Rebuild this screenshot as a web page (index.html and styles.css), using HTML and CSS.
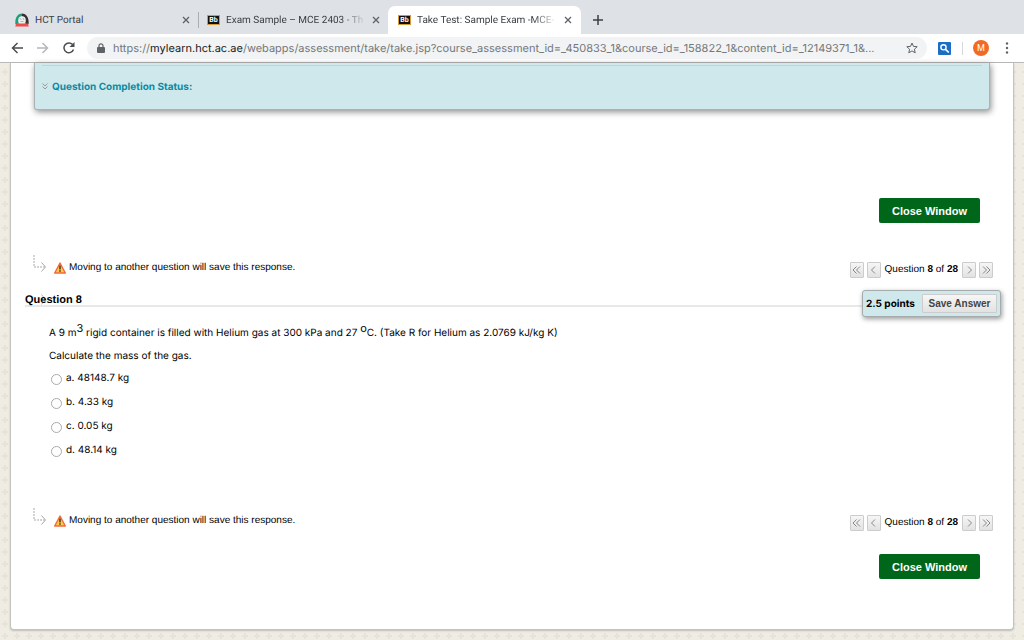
FILE: index.html
```html
<!DOCTYPE html>
<html lang="en">
<head>
  <meta charset="UTF-8">
  <meta name="viewport" content="width=device-width, initial-scale=1.0">
  <title>Take Test: Sample Exam</title>
  <link rel="stylesheet" href="styles.css">
</head>
<body>

  <!-- Shared icons -->
  <svg class="sprite" aria-hidden="true">
    <symbol id="close" viewBox="0 0 8 8"><path d="M1 1l6 6M7 1L1 7" fill="none" stroke="#5f6368" stroke-width="1.3"/></symbol>
    <symbol id="step" viewBox="0 0 14 17">
      <path d="M1 0v12h11" fill="none" stroke="#aaa" stroke-dasharray="2 1"/>
      <path d="M8.500 7.500l4 4.500-4 4.500" fill="none" stroke="#aaa"/>
    </symbol>
    <symbol id="warning" viewBox="0 0 12 12">
      <path d="M6 1L11.300 11H.7z" fill="#ffc94a" stroke="#f4683c" stroke-width="1.400" stroke-linejoin="round"/>
      <path d="M6 3.600v3.800M6 8.300v1.500" stroke="#222" stroke-width="1.300"/>
    </symbol>
    <symbol id="single" viewBox="0 0 9 8"><path d="M6 .5L2.500 4 6 7.500" fill="none" stroke="#888"/></symbol>
    <symbol id="double" viewBox="0 0 9 8"><path d="M4.500 .5L1 4l3.500 3.500M8 .5L4.500 4 8 7.500" fill="none" stroke="#888"/></symbol>
  </svg>

  <!-- Browser bar -->
  <header class="browser">
    <div class="tabs">
      <div class="tab">
        <svg class="portal-icon" viewBox="0 0 14 14">
          <path d="M.5 11C-.5 5 3 .5 7 .5v3C4 4 3.500 8 3.500 11z" fill="#1d9f77"/>
          <path d="M7 .5c4 0 7.500 4.500 6.500 10.500h-3c0-3-.5-6.500-3.500-7.500z" fill="#333"/>
          <circle cx="7" cy="7" r="3.800" fill="#eee"/>
          <path d="M4.500 5.500l2 1M8 5l1 2M5.500 8.500h3" stroke="#999" stroke-width=".7"/>
          <path d="M0 10.500h14l-1 1.500 1 1.500H0L1 12z" fill="#ef4b4b"/>
        </svg>
        <span class="tab-title">HCT Portal</span>
        <button class="tab-close" aria-label="Close tab"><svg><use href="#close"/></svg></button>
      </div>
      <div class="tab tab-second">
        <span class="bb-icon">Bb</span>
        <span class="tab-title fade">Exam Sample – MCE 2403 - Th</span>
        <button class="tab-close" aria-label="Close tab"><svg><use href="#close"/></svg></button>
      </div>
      <div class="tab active">
        <span class="bb-icon">Bb</span>
        <span class="tab-title fade">Take Test: Sample Exam -MCE-</span>
        <button class="tab-close" aria-label="Close tab"><svg><use href="#close"/></svg></button>
      </div>
      <button class="new-tab" aria-label="New tab"><svg viewBox="0 0 10 10"><path d="M5 0v10M0 5h10" stroke="#3c4043" stroke-width="1.500"/></svg></button>
    </div>

    <div class="toolbar">
      <button class="tool" aria-label="Back"><svg viewBox="0 0 12 12"><path d="M12 6H1.500M6.500 1l-5 5 5 5" fill="none" stroke="#4a4d51" stroke-width="1.500"/></svg></button>
      <button class="tool" aria-label="Forward"><svg viewBox="0 0 12 12"><path d="M0 6h10.500M5.500 1l5 5-5 5" fill="none" stroke="#b5b7ba" stroke-width="1.500"/></svg></button>
      <button class="tool" aria-label="Reload"><svg viewBox="0 0 12 12"><path d="M10.500 7.500A4.900 4.900 0 1 1 9.600 2.600" fill="none" stroke="#4a4d51" stroke-width="1.500"/><path d="M11.500 0v5h-5z" fill="#4a4d51"/></svg></button>
      <div class="address">
        <svg class="lock" viewBox="0 0 8 10"><rect y="4" width="8" height="6" rx="1" fill="#5f6368"/><path d="M2 4.500V2.800a2 2 0 0 1 4 0v1.700" fill="none" stroke="#5f6368" stroke-width="1.200"/></svg>
        <span class="url">https://<b>mylearn.hct.ac.ae</b>/webapps/assessment/take/take.jsp?course_assessment_id=_450833_1&amp;course_id=_158822_1&amp;content_id=_12149371_1&amp;...</span>
        <svg class="star" viewBox="0 0 12 12"><path d="M6 1l1.500 3.400 3.700.3-2.800 2.500.8 3.600L6 8.900l-3.200 1.900.8-3.600L.8 4.700l3.700-.3z" fill="none" stroke="#5f6368"/></svg>
      </div>
      <button class="extension" aria-label="Search extension"><svg viewBox="0 0 13 13"><rect width="13" height="13" rx="1" fill="#1b6ec2"/><circle cx="5.500" cy="5.300" r="2.600" fill="none" stroke="#fff" stroke-width="1.400"/><path d="M7.500 7.300l3.300 3.200" stroke="#fff" stroke-width="1.700"/></svg></button>
      <button class="avatar">M</button>
      <button class="menu" aria-label="Menu"><svg viewBox="0 0 4 12"><circle cx="2" cy="1.500" r="1.200"/><circle cx="2" cy="6" r="1.200"/><circle cx="2" cy="10.500" r="1.200"/></svg></button>
    </div>
  </header>

  <main class="page">
    <section class="status">
      <a href="#" class="status-link"><svg viewBox="0 0 6 7"><path d="M.5 .5L3 3 5.500 .5M.5 3.500L3 6l2.500-2.500" fill="none" stroke="#999"/></svg>Question Completion Status:</a>
    </section>

    <div class="close-row">
      <button class="close-window">Close Window</button>
    </div>

    <div class="move-row">
      <svg class="step"><use href="#step"/></svg>
      <svg class="warning"><use href="#warning"/></svg>
      <span class="move-text">Moving to another question will save this response.</span>
      <nav class="pager">
        <button aria-label="First question"><svg><use href="#double"/></svg></button>
        <button aria-label="Previous question"><svg><use href="#single"/></svg></button>
        <span>Question <b>8</b> of <b>28</b></span>
        <button class="next" aria-label="Next question"><svg><use href="#single"/></svg></button>
        <button class="next" aria-label="Last question"><svg><use href="#double"/></svg></button>
      </nav>
    </div>

    <div class="question-head">
      <h1>Question 8<svg class="head-arrow" viewBox="0 0 5 11"><path d="M.5 .5l4 5-4 5" fill="none" stroke="#bbb"/></svg></h1>
      <div class="points">
        <span>2.5 points</span>
        <button>Save Answer</button>
      </div>
    </div>

    <form class="question">
      <p>A 9 m<sup>3</sup> rigid container is filled with Helium gas at 300 kPa and 27 <sup>o</sup>C. (Take R for Helium as 2.0769 kJ/kg K)</p>
      <p>Calculate the mass of the gas.</p>
      <div class="answers">
        <label><input type="radio" name="answer"><span>a. 48148.7 kg</span></label>
        <label><input type="radio" name="answer"><span>b. 4.33 kg</span></label>
        <label><input type="radio" name="answer"><span>c. 0.05 kg</span></label>
        <label><input type="radio" name="answer"><span>d. 48.14 kg</span></label>
      </div>
    </form>

    <div class="move-row">
      <svg class="step"><use href="#step"/></svg>
      <svg class="warning"><use href="#warning"/></svg>
      <span class="move-text">Moving to another question will save this response.</span>
      <nav class="pager">
        <button aria-label="First question"><svg><use href="#double"/></svg></button>
        <button aria-label="Previous question"><svg><use href="#single"/></svg></button>
        <span>Question <b>8</b> of <b>28</b></span>
        <button class="next" aria-label="Next question"><svg><use href="#single"/></svg></button>
        <button class="next" aria-label="Last question"><svg><use href="#double"/></svg></button>
      </nav>
    </div>

    <div class="close-row bottom">
      <button class="close-window">Close Window</button>
    </div>
  </main>

</body>
</html>
```
FILE: styles.css
```css
* {
  box-sizing: border-box;
}

body {
  margin: 0;
  font-family: Inter, "Liberation Sans", sans-serif;
  font-size: 10px;
  text-rendering: geometricPrecision;
  color: #000;
  background: #efece4 url("data:image/svg+xml,%3Csvg xmlns='http://www.w3.org/2000/svg' width='12' height='12'%3E%3Cpath d='M5 3v6M2 6h6' stroke='%23e6e3db' stroke-width='2'/%3E%3C/svg%3E") 0 6px;
}

button {
  font-family: inherit;
  padding: 0;
  border: none;
  background: none;
}

svg {
  display: block;
  flex: none;
}

.sprite {
  display: none;
}

/* Browser bar */
.browser {
  font-family: Roboto, sans-serif;
  background: #dee1e6;
  border-bottom: 1px solid #b9b9b9;
}

.tabs {
  display: flex;
  height: 34px;
  padding: 6px 0 0 8px;
}

.tab {
  display: flex;
  align-items: center;
  gap: 6px;
  width: 190px;
  padding: 0 8px 0 7px;
  color: #3c4043;
}

.tab-second {
  position: relative;
  padding-left: 9px;
}

.tab-second::before {
  content: "";
  position: absolute;
  left: 0;
  top: 6px;
  width: 1px;
  height: 16px;
  background: #aaadb1;
}

.tab.active {
  width: 193px;
  padding: 0 9px 0 10px;
  background: #fff;
  border-radius: 7px 7px 0 0;
}

.tab-title {
  flex: 1;
  min-width: 0;
  white-space: nowrap;
}

.fade {
  -webkit-mask-image: linear-gradient(to right, #000 82%, transparent);
  mask-image: linear-gradient(to right, #000 82%, transparent);
}

.portal-icon {
  width: 14px;
  height: 14px;
}

.bb-icon {
  width: 13px;
  height: 10px;
  border: 1px solid #d69a3a;
  background: #111;
  color: #fff;
  font-size: 7px;
  font-weight: bold;
  line-height: 8px;
  text-align: center;
}

.tab-close svg {
  width: 8px;
  height: 8px;
}

.new-tab {
  width: 34px;
  display: flex;
  align-items: center;
  justify-content: center;
}

.new-tab svg {
  width: 10px;
  height: 10px;
}

.toolbar {
  display: flex;
  align-items: center;
  height: 28px;
  padding: 0 15px 0 11px;
  background: #fff;
}

.tool {
  width: 26px;
}

.tool svg {
  width: 12px;
  height: 12px;
}

.address {
  display: flex;
  align-items: center;
  flex: 1;
  min-width: 0;
  height: 22px;
  margin-left: -2px;
  padding: 0 9px 0 10px;
  border-radius: 11px;
  background: #f1f3f4;
}

.lock {
  width: 8px;
  height: 10px;
  margin-right: 8px;
}

.url {
  flex: 1;
  font-family: Inter, sans-serif;
  font-size: 11px;
  color: #74787c;
  white-space: nowrap;
}

.url b {
  font-weight: normal;
  color: #202124;
}

.star {
  width: 12px;
  height: 12px;
}

.extension {
  margin-left: 11px;
  padding-right: 11px;
  border-right: 1px solid #d5d7da;
}

.extension svg {
  width: 13px;
  height: 13px;
}

.avatar {
  width: 16px;
  height: 16px;
  margin: 0 16px 0 10px;
  border-radius: 50%;
  background: #f26a25;
  color: #fff;
  font-size: 9px;
}

.menu svg {
  width: 4px;
  height: 12px;
  fill: #5f6368;
}

/* Test page */
.page {
  margin: 0 10px 10px;
  padding-bottom: 50px;
  background: #fff;
  border: 1px solid #c4c3bf;
  border-top: none;
  border-radius: 0 0 4px 4px;
  box-shadow: 0 1px 2px rgba(0, 0, 0, 0.2);
}

.status {
  height: 47px;
  margin: 0 23px;
  padding: 2px 7px 0;
  background: #cfe8ec;
  border: 1px solid #a9b3b5;
  border-top: none;
  border-radius: 0 0 3px 3px;
  box-shadow: 1px 2px 6px rgba(0, 0, 0, 0.45);
}

.status-link {
  display: flex;
  align-items: center;
  gap: 4px;
  height: 42px;
  border-top: 1px solid #bfd5d9;
  color: #0b8ba3;
  font-weight: bold;
  text-decoration: none;
}

.status-link svg {
  width: 6px;
  height: 7px;
}

.close-row {
  display: flex;
  justify-content: flex-end;
  padding: 88px 33px 0 0;
}

.close-row.bottom {
  padding-top: 22px;
}

.close-window {
  width: 101px;
  height: 25px;
  border-radius: 2px;
  background: #00661a;
  color: #fff;
  font-family: "Liberation Sans", Arial, sans-serif;
  font-size: 11px;
  font-weight: bold;
}

.move-row {
  display: flex;
  align-items: center;
  height: 18px;
  margin: 38px 20px 0 22px;
  font-family: "Liberation Sans", Arial, sans-serif;
}

.step {
  width: 14px;
  height: 17px;
  align-self: flex-start;
  margin-top: -6px;
}

.warning {
  width: 12px;
  height: 12px;
  margin: -4px 3px 0 7px;
}

.move-text {
  padding-bottom: 5px;
}

.pager {
  display: flex;
  align-items: center;
  gap: 3px;
  margin-left: auto;
}

.pager span {
  padding: 0 1px 1px;
}

.pager button {
  display: flex;
  align-items: center;
  justify-content: center;
  width: 14px;
  height: 16px;
  border: 1px solid #ccc;
  border-radius: 1px;
  background: linear-gradient(#f6f6f6, #e2e2e2);
}

.pager svg {
  width: 9px;
  height: 8px;
}

.next svg {
  transform: scaleX(-1);
}

.question-head {
  display: flex;
  align-items: center;
  justify-content: space-between;
  height: 27px;
  margin: 11px 12px 0 14px;
  background: linear-gradient(#e8e8e8, #e8e8e8) 0 15px / 100% 2px no-repeat;
}

.question-head h1 {
  position: relative;
  z-index: 0;
  margin: 0 0 8px;
  font-family: "Liberation Sans", Arial, sans-serif;
  font-size: 11px;
}

.head-arrow {
  position: absolute;
  left: 16px;
  top: 0;
  z-index: -1;
  width: 5px;
  height: 11px;
}

.points {
  display: flex;
  align-items: center;
  justify-content: space-between;
  width: 139px;
  height: 27px;
  padding: 0 3px;
  background: #cfe8ec;
  border: 1px solid #a5acae;
  border-radius: 3px;
  box-shadow: 1px 2px 5px rgba(0, 0, 0, 0.4);
  font-weight: bold;
}

.points button {
  width: 75px;
  height: 19px;
  border: 1px solid #ccc;
  border-radius: 1px;
  background: linear-gradient(#f6f6f6, #e2e2e2);
  color: #444;
  font-family: "Liberation Sans", Arial, sans-serif;
  font-size: 10px;
  font-weight: bold;
}

.question {
  padding: 10px 38px 14px;
}

.question p {
  margin: 0 0 11px;
  line-height: 12px;
}

.question sup {
  font-size: 11px;
  line-height: 0;
}

.answers {
  margin-top: -7px;
}

.answers label {
  display: flex;
  align-items: center;
  gap: 4px;
  width: fit-content;
  height: 24px;
}

.answers input {
  appearance: none;
  width: 11px;
  height: 11px;
  margin: 3px 0 0 2px;
  border: 1px solid #aaa;
  border-radius: 50%;
  background: #fff;
}
```
